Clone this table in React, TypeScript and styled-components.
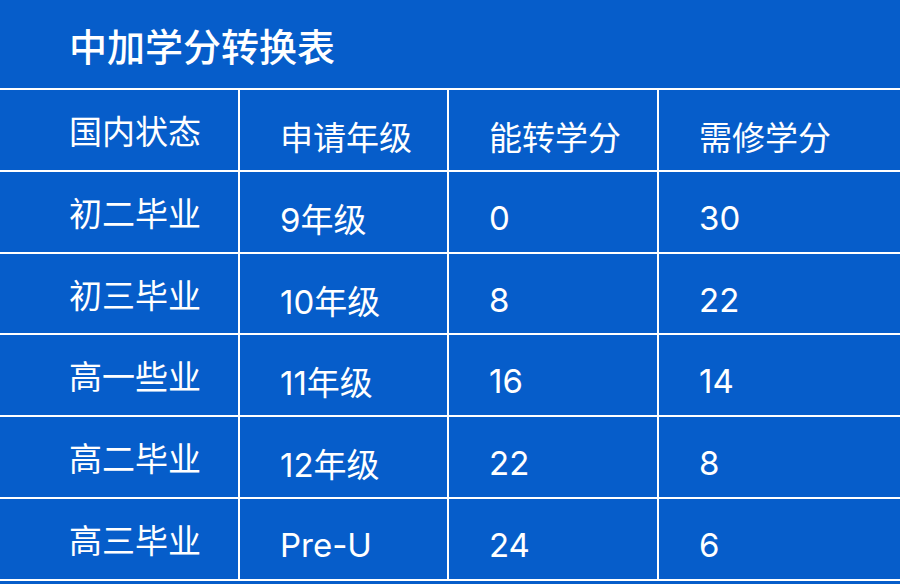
import styled, { createGlobalStyle } from 'styled-components';

const GlobalStyle = createGlobalStyle`
  html, body {
    margin: 0;
    padding: 0;
    background: #065dca;
  }
  body {
    font-family: Inter, 'Noto Sans CJK SC', sans-serif;
  }
`;

const rows = [
  ['初二毕业', '9年级', '0', '30'],
  ['初三毕业', '10年级', '8', '22'],
  ['高一些业', '11年级', '16', '14'],
  ['高二毕业', '12年级', '22', '8'],
  ['高三毕业', 'Pre-U', '24', '6'],
];

const headers = ['国内状态', '申请年级', '能转学分', '需修学分'];

const App = () => {
  return (
    <Page>
      <GlobalStyle />
      <Title>中加学分转换表</Title>
      <Table>
        {headers.map((h, i) => (
          <Cell key={h} $first={i === 0}>
            {h}
          </Cell>
        ))}
        {rows.map((row) =>
          row.map((value, i) => (
            <Cell key={row[0] + i} $first={i === 0}>
              {value}
            </Cell>
          )),
        )}
      </Table>
    </Page>
  );
};

const Page = styled.div`
  width: 900px;
  height: 584px;
  overflow: hidden;
  background: #065dca;
  color: #ffffff;
`;

const Title = styled.h1`
  margin: 0;
  height: 88px;
  padding-left: 69px;
  display: flex;
  align-items: center;
  font-size: 38px;
  font-weight: 500;
  letter-spacing: 0;
`;

const Table = styled.div`
  display: grid;
  grid-template-columns: 238px 207px 208px 1fr;
  grid-template-rows: 80px 80px 79px 80px 80px 80px;
  gap: 2px;
  padding: 2px 0;
  background: #ffffff;
`;

const Cell = styled.div<{ $first?: boolean }>`
  background: #065dca;
  display: flex;
  align-items: center;
  padding-left: ${(p) => (p.$first ? '69px' : '40px')};
  padding-top: ${(p) => (p.$first ? '0' : '12px')};
  font-size: 33px;
  font-weight: 400;
  white-space: nowrap;
`;

export default App;
